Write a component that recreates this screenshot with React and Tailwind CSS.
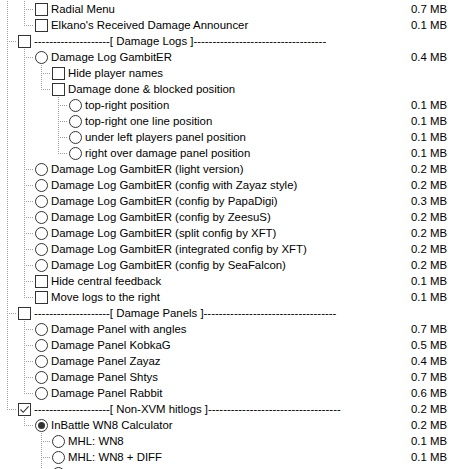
import React from "react";

const dash = (n) => "-".repeat(n);
const section = (name) => `${dash(20)}[ ${name} ]${dash(35)}`;

const tree = [
  {
    hidden: true,
    children: [
      { kind: "check", label: "Radial Menu", size: "0.7 MB" },
      { kind: "check", label: "Elkano's Received Damage Announcer", size: "0.1 MB" },
    ],
  },
  {
    kind: "check",
    label: section("Damage Logs"),
    children: [
      {
        kind: "radio",
        label: "Damage Log GambitER",
        size: "0.4 MB",
        children: [
          { kind: "check", label: "Hide player names" },
          {
            kind: "check",
            label: "Damage done & blocked position",
            children: [
              { kind: "radio", label: "top-right position", size: "0.1 MB" },
              { kind: "radio", label: "top-right one line position", size: "0.1 MB" },
              { kind: "radio", label: "under left players panel position", size: "0.1 MB" },
              { kind: "radio", label: "right over damage panel position", size: "0.1 MB" },
            ],
          },
        ],
      },
      { kind: "radio", label: "Damage Log GambitER (light version)", size: "0.2 MB" },
      { kind: "radio", label: "Damage Log GambitER (config with Zayaz style)", size: "0.2 MB" },
      { kind: "radio", label: "Damage Log GambitER (config by PapaDigi)", size: "0.3 MB" },
      { kind: "radio", label: "Damage Log GambitER (config by ZeesuS)", size: "0.2 MB" },
      { kind: "radio", label: "Damage Log GambitER (split config by XFT)", size: "0.2 MB" },
      { kind: "radio", label: "Damage Log GambitER (integrated config by XFT)", size: "0.2 MB" },
      { kind: "radio", label: "Damage Log GambitER (config by SeaFalcon)", size: "0.2 MB" },
      { kind: "check", label: "Hide central feedback", size: "0.1 MB" },
      { kind: "check", label: "Move logs to the right", size: "0.1 MB" },
    ],
  },
  {
    kind: "check",
    label: section("Damage Panels"),
    children: [
      { kind: "radio", label: "Damage Panel with angles", size: "0.7 MB" },
      { kind: "radio", label: "Damage Panel KobkaG", size: "0.5 MB" },
      { kind: "radio", label: "Damage Panel Zayaz", size: "0.4 MB" },
      { kind: "radio", label: "Damage Panel Shtys", size: "0.7 MB" },
      { kind: "radio", label: "Damage Panel Rabbit", size: "0.6 MB" },
    ],
  },
  {
    kind: "check",
    checked: true,
    label: section("Non-XVM hitlogs"),
    size: "0.2 MB",
    children: [
      {
        kind: "radio",
        checked: true,
        label: "InBattle WN8 Calculator",
        size: "0.2 MB",
        children: [
          { kind: "radio", label: "MHL: WN8", size: "0.1 MB" },
          { kind: "radio", label: "MHL: WN8 + DIFF", size: "0.1 MB" },
          { kind: "radio", label: "" },
        ],
      },
    ],
  },
];

function flatten(nodes, guides = [], out = []) {
  nodes.forEach((node, i) => {
    const last = i === nodes.length - 1;
    if (!node.hidden) out.push({ node, guides, last });
    if (node.children) flatten(node.children, [...guides, !last], out);
  });
  return out;
}

const LINE = "#a0a0a0";

// Ancestor column: dotted vertical line when that ancestor has more siblings.
function Guide({ on }) {
  return (
    <svg width="17" height="16" className="shrink-0" shapeRendering="crispEdges">
      {on && <line x1="7.5" y1="0" x2="7.5" y2="16" stroke={LINE} strokeDasharray="1 1" />}
    </svg>
  );
}

// Connector column: ├ or └ in dotted lines.
function Connector({ last }) {
  return (
    <svg width="17" height="16" className="shrink-0" shapeRendering="crispEdges">
      <line x1="7.5" y1="0" x2="7.5" y2={last ? 9 : 16} stroke={LINE} strokeDasharray="1 1" />
      <line x1="9" y1="8.5" x2="17" y2="8.5" stroke={LINE} strokeDasharray="1 1" />
    </svg>
  );
}

function Check({ checked }) {
  return (
    <span className="ml-px flex h-[13px] w-[13px] shrink-0 items-center justify-center border border-[#333333] bg-white">
      {checked && (
        <svg width="11" height="11" viewBox="0 0 11 11">
          <path d="M1.5 5.5 L4.2 8.3 L9.6 2.4" fill="none" stroke="#333333" strokeWidth="1.1" />
        </svg>
      )}
    </span>
  );
}

function Radio({ checked }) {
  return (
    <span className="ml-px flex h-[13px] w-[13px] shrink-0 items-center justify-center rounded-full border border-[#333333] bg-white">
      {checked && <span className="h-[7px] w-[7px] rounded-full bg-[#333333]" />}
    </span>
  );
}

export default function App() {
  const rows = flatten(tree);
  return (
    <div
      className="h-[469px] w-[455px] overflow-hidden bg-white text-[11.4px] leading-4 text-black"
      style={{ fontFamily: '"Liberation Sans", Arial, sans-serif' }}
    >
      <div className="pt-px">
        {rows.map(({ node, guides, last }, idx) => (
          <div key={idx} className="flex h-4 items-center">
            {guides.map((g, i) => (
              <Guide key={i} on={g} />
            ))}
            <Connector last={last} />
            {node.kind === "check" ? <Check checked={node.checked} /> : <Radio checked={node.checked} />}
            <span className="ml-[3px] whitespace-nowrap">{node.label}</span>
            <span className="ml-auto shrink-0 whitespace-nowrap pr-2">{node.size}</span>
          </div>
        ))}
      </div>
    </div>
  );
}
